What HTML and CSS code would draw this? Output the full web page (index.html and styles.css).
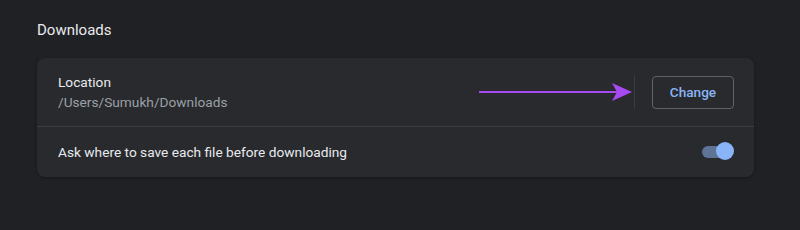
FILE: index.html
```html
<!DOCTYPE html>
<html lang="en">
<head>
    <meta charset="UTF-8">
    <title>Downloads</title>
    <link rel="stylesheet" href="styles.css">
</head>
<body>
    <div class="page">
        <h2 class="title">Downloads</h2>
        <div class="card">
            <div class="row">
                <div class="label">
                    <div class="name">Location</div>
                    <div class="sub">/Users/Sumukh/Downloads</div>
                </div>
                <svg class="arrow" width="154" height="20" viewBox="0 0 154 20">
                    <line x1="0" y1="10" x2="138" y2="10" stroke="#a74af2" stroke-width="2"/>
                    <polygon points="133,1 153,10 133,19 138,10" fill="#a74af2"/>
                </svg>
                <div class="sep"></div>
                <button class="btn">Change</button>
            </div>
            <div class="row small">
                <div class="name">Ask where to save each file before downloading</div>
                <div class="toggle"><span class="knob"></span></div>
            </div>
        </div>
    </div>
</body>
</html>
```

FILE: styles.css
```css
* {
    padding: 0;
    margin: 0;
    box-sizing: border-box;
}

body {
    background: #202124;
    font-family: Roboto, "Liberation Sans", sans-serif;
    width: 800px;
    height: 230px;
    overflow: hidden;
}

.page {
    padding: 20px 46px 0 37px;
}

.title {
    font-size: 15px;
    font-weight: 400;
    color: #e8eaed;
    height: 21px;
    line-height: 21px;
    margin-bottom: 17px;
}

.card {
    background: #292a2d;
    border-radius: 8px;
    box-shadow: 0 1px 3px rgba(0, 0, 0, .35);
}

.row {
    display: flex;
    align-items: center;
    height: 68px;
    padding: 0 20px 0 21px;
}

.row.small {
    height: 51px;
    border-top: 1px solid #3c3d40;
}

.label {
    flex: 1;
}

.name {
    font-size: 13.7px;
    color: #e8eaed;
    line-height: 20px;
}

.row.small .name {
    flex: 1;
}

.sub {
    font-size: 13.7px;
    color: #9aa0a6;
    line-height: 20px;
}

.arrow {
    display: block;
    margin-right: 1px;
}

.sep {
    width: 1px;
    height: 34px;
    background: #3c3d40;
    margin-right: 17px;
}

.btn {
    width: 82px;
    height: 33px;
    background: transparent;
    border: 1px solid #5f6368;
    border-radius: 4px;
    color: #8ab4f8;
    font: 500 13.6px Roboto, "Liberation Sans", sans-serif;
}

.toggle {
    position: relative;
    width: 28px;
    height: 12px;
    border-radius: 6px;
    background: #5e7396;
    margin-right: 4px;
}

.knob {
    position: absolute;
    right: -4px;
    top: -4px;
    width: 18px;
    height: 18px;
    border-radius: 50%;
    background: #8ab4f8;
}
```
